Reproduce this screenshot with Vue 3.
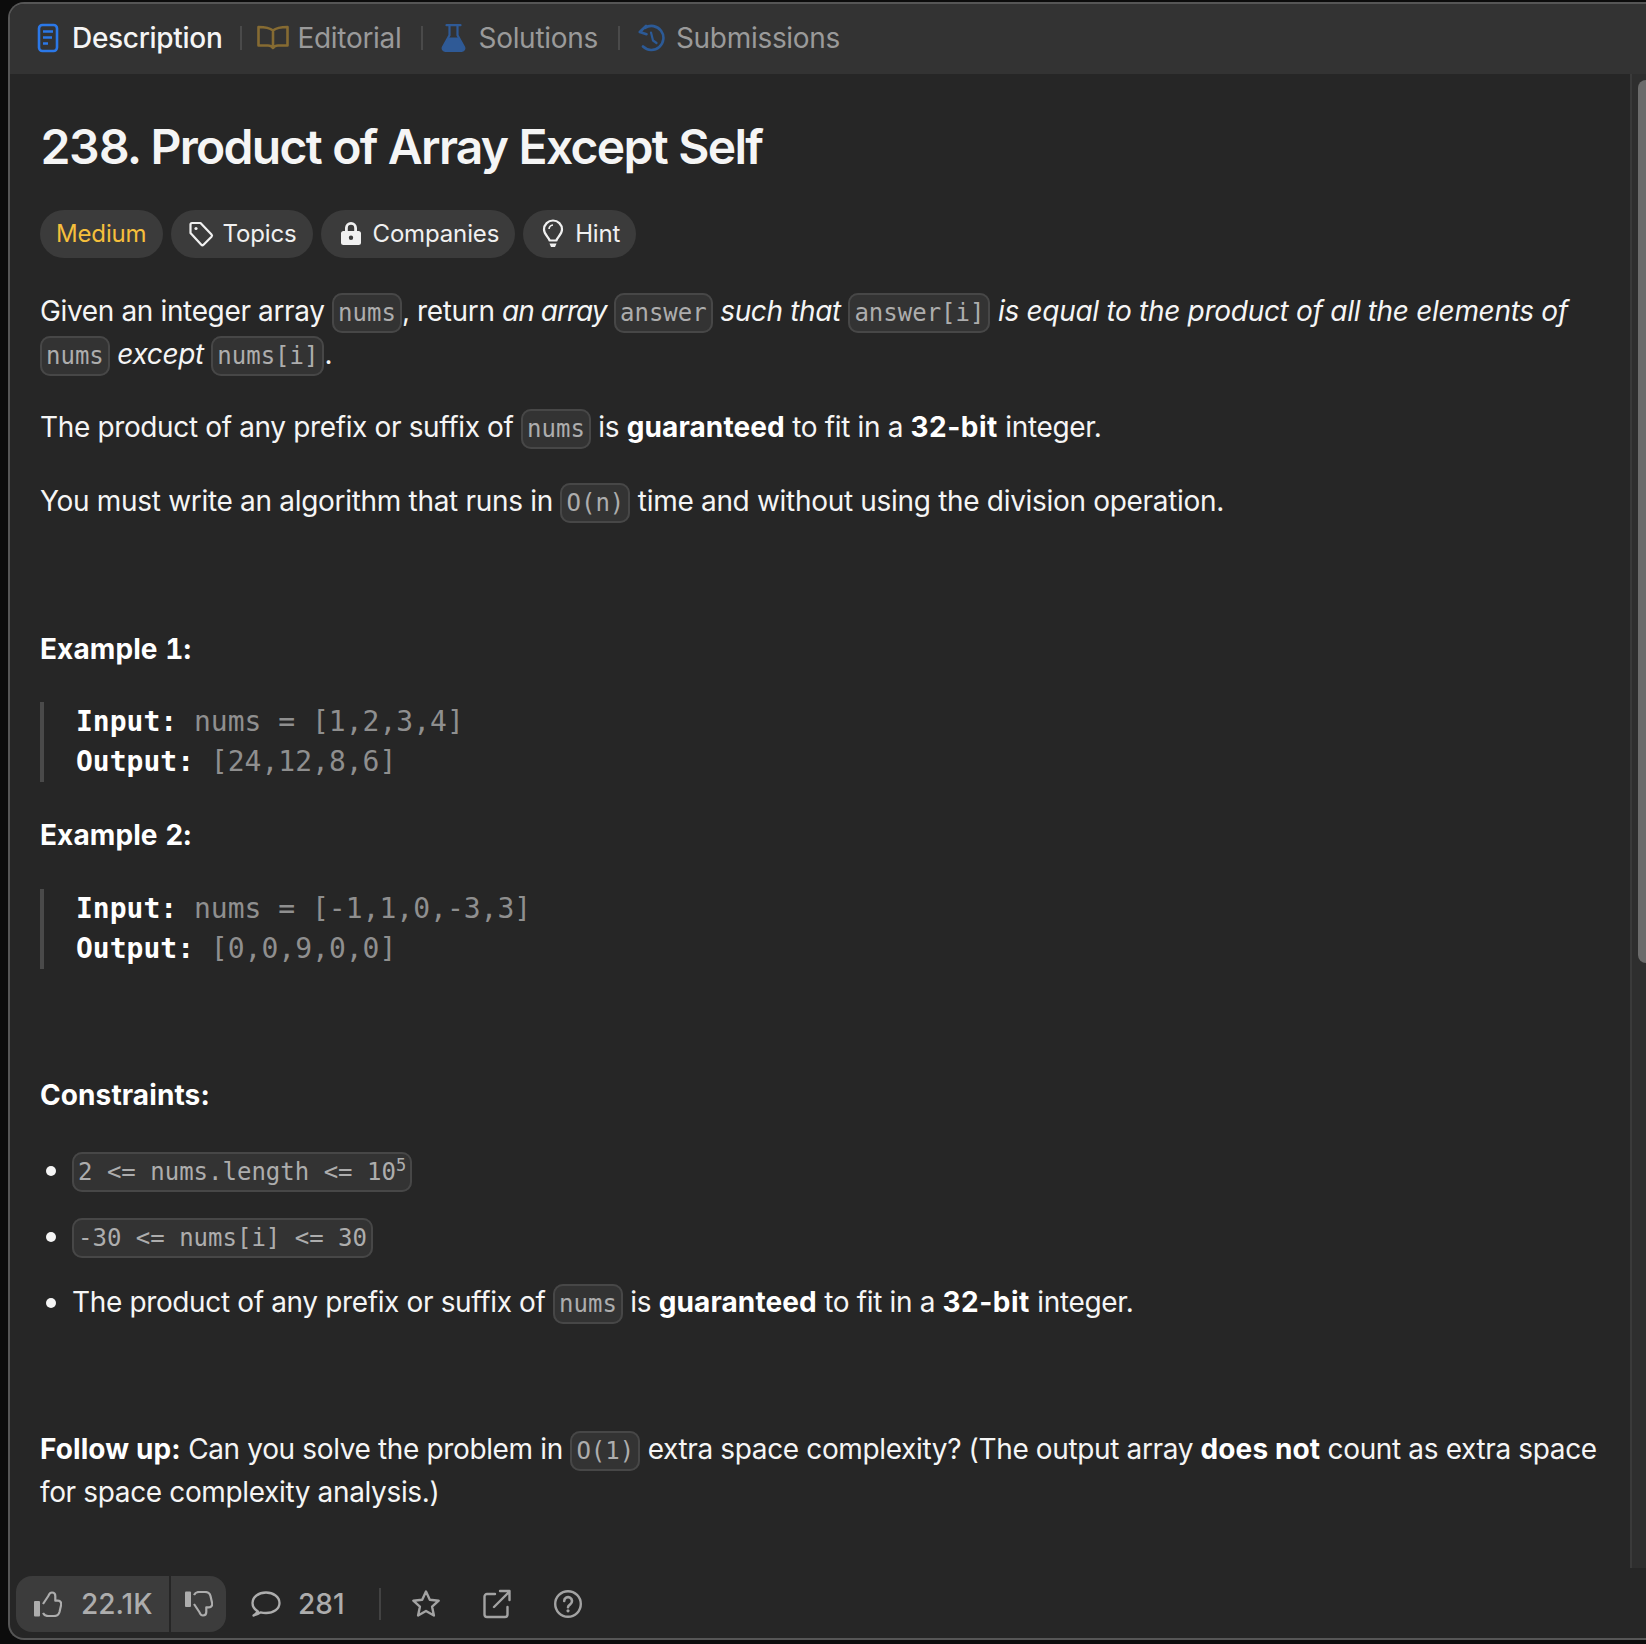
<template>
  <div class="page">
    <div class="panel">
      <nav class="tabs">
        <div class="tab active">
          <svg class="tab-icon" width="24" height="30" viewBox="0 0 24 30" fill="none" stroke="#2b78e8" stroke-width="2.600">
            <rect x="3" y="2" width="18" height="26" rx="3.500" />
            <path d="M7 8.500h10M7 14.500h9M7 20.500h5" stroke-width="2.400" />
          </svg>
          <span>Description</span>
        </div>
        <i class="sep"></i>
        <div class="tab editorial">
          <svg class="tab-icon" width="32" height="26" viewBox="0 0 32 26" fill="none" stroke="#866b32" stroke-width="2.600" stroke-linejoin="round">
            <path d="M16 5.500C13 3 9 2 1.500 2v18.500H11c2.500 0 4 1 5 2.500 1-1.500 2.500-2.500 5-2.500h9.500V2C23 2 19 3 16 5.500zV22" />
          </svg>
          <span>Editorial</span>
        </div>
        <i class="sep"></i>
        <div class="tab solutions">
          <svg class="tab-icon" width="25" height="30" viewBox="0 0 25 30">
            <path d="M5.500 2.200h14M8.500 2.200v10L2 24c-1 2 .5 4 2.500 4h16c2 0 3.500-2 2.500-4l-6.500-11.800v-10" fill="none" stroke="#2f5a96" stroke-width="2.200" stroke-linecap="round" />
            <path d="M7.500 14.500h10L23 24.500c1 2-.5 3.500-2.500 3.500h-16C2.500 28 1 26.500 2 24.500z" fill="#2f5a96" />
          </svg>
          <span>Solutions</span>
        </div>
        <i class="sep"></i>
        <div class="tab submissions">
          <svg class="tab-icon" width="28" height="28" viewBox="0 0 28 28" fill="none" stroke="#2c5a96" stroke-width="2.600" stroke-linecap="round" stroke-linejoin="round">
            <path d="M7 3.800A12 12 0 1 1 5 22.500" />
            <path d="M8 2L1.800 8l6.700 2.200" />
            <path d="M13 8.500l2 8 3.500 2.500" stroke-width="2.200" />
          </svg>
          <span>Submissions</span>
        </div>
      </nav>

      <div class="main">
        <div class="content">
          <h1>238. Product of Array Except Self</h1>

          <div class="pills">
            <div class="pill medium">Medium</div>
            <div class="pill">
              <svg width="28" height="28" viewBox="0 0 28 28" fill="none" stroke="#f0f0f0" stroke-width="2.200" stroke-linejoin="round">
                <path d="M3.500 4.500a1.500 1.500 0 0 1 1.500-1.500h8.500l11 11.500a1.600 1.600 0 0 1 0 2.200l-8 8a1.600 1.600 0 0 1-2.200 0L3.500 13z" />
                <circle cx="9" cy="8.500" r="1.600" fill="#f0f0f0" stroke="none" />
              </svg>
              Topics
            </div>
            <div class="pill">
              <svg width="28" height="28" viewBox="-2 0 28 28" fill="#f0f0f0">
                <path d="M6 11V8a6 6 0 0 1 12 0v3h-2.800V8a3.200 3.200 0 0 0-6.400 0v3z" />
                <path d="M4.500 11h15a2.500 2.500 0 0 1 2.500 2.500v9a2.500 2.500 0 0 1-2.500 2.500h-15A2.500 2.500 0 0 1 2 22.500v-9A2.500 2.500 0 0 1 4.500 11zM12 15.500a2.200 2.200 0 1 0 0 4.400 2.200 2.200 0 0 0 0-4.400z" fill-rule="evenodd" />
              </svg>
              Companies
            </div>
            <div class="pill">
              <svg width="28" height="30" viewBox="-3 0 28 30" fill="none" stroke="#f0f0f0" stroke-width="2.200" stroke-linejoin="round">
                <path d="M7.500 21.500c0-3-5.500-5.500-5.500-11a9 9 0 0 1 18 0c0 5.500-5.500 8-5.500 11z" />
                <path d="M11 6a4.500 4.500 0 0 0-4 4" stroke-width="1.600" />
                <path d="M7.500 24.500h7l-1.500 3.500h-4z" fill="#f0f0f0" stroke="none" />
              </svg>
              Hint
            </div>
          </div>

          <p>Given an integer array <code>nums</code>, return <em class="snug">an array</em> <code>answer</code> <em>such that</em> <code>answer[i]</code> <em class="loose">is equal to the product of all the elements of</em> <code>nums</code> <em>except</em> <code>nums[i]</code>.</p>
          <p>The product of any prefix or suffix of <code>nums</code> is <strong>guaranteed</strong> to fit in a <strong class="bits">32-bit</strong> integer.</p>
          <p class="runs">You must write an algorithm that runs in <code>O(n)</code> time and without using the division operation.</p>
          <p class="spacer">&nbsp;</p>

          <p class="example"><strong>Example 1:</strong></p>
          <pre><strong>Input:</strong> nums = [1,2,3,4]
<strong>Output:</strong> [24,12,8,6]</pre>

          <p class="example"><strong>Example 2:</strong></p>
          <pre><strong>Input:</strong> nums = [-1,1,0,-3,3]
<strong>Output:</strong> [0,0,9,0,0]</pre>

          <p>&nbsp;</p>
          <p><strong>Constraints:</strong></p>

          <ul>
            <li><code>2 &lt;= nums.length &lt;= 10<sup>5</sup></code></li>
            <li><code>-30 &lt;= nums[i] &lt;= 30</code></li>
            <li>The product of any prefix or suffix of <code>nums</code> is <strong>guaranteed</strong> to fit in a <strong class="bits">32-bit</strong> integer.</li>
          </ul>

          <p>&nbsp;</p>
          <p><strong>Follow up:</strong> Can you solve the problem in <code>O(1)</code> extra space complexity? (The output array <strong>does not</strong> count as extra space for space complexity analysis.)</p>
        </div>
        <div class="track"><div class="thumb"></div></div>
      </div>

      <footer class="footer">
        <div class="votes">
          <div class="vote like">
            <svg width="28" height="26" viewBox="0 0 28 26" fill="none" stroke="#adadad" stroke-width="2.200" stroke-linejoin="round">
              <rect x="0" y="10" width="6" height="15.500" rx="1" fill="#adadad" stroke="none" />
              <path d="M9 13L14.300 5C15 3 16 1.500 18 1.500c2 0 3.300 1.500 3.300 3.500v4.700H24c2.500 0 3.700 2.300 3 4.800L25.500 21c-.7 2.500-2.500 4-5.500 4h-6c-2 0-4-1-5-3" />
            </svg>
            <span>22.1K</span>
          </div>
          <div class="vote dislike">
            <svg width="28" height="26" viewBox="0 0 28 26" fill="none" stroke="#adadad" stroke-width="2.200" stroke-linejoin="round">
              <g transform="translate(0 26) scale(1 -1)">
                <rect x="0" y="10" width="6" height="15.500" rx="1" fill="#adadad" stroke="none" />
                <path d="M9 13L14.300 5C15 3 16 1.500 18 1.500c2 0 3.300 1.500 3.300 3.500v4.700H24c2.500 0 3.700 2.300 3 4.800L25.500 21c-.7 2.500-2.500 4-5.500 4h-6c-2 0-4-1-5-3" />
              </g>
            </svg>
          </div>
        </div>
        <div class="comments">
          <svg width="30" height="26" viewBox="0 0 30 26" fill="none" stroke="#adadad" stroke-width="2.300" stroke-linejoin="round">
            <path d="M7 20.500C3.500 18.500 1.500 15.500 1.500 12 1.500 6 7.500 1.500 15 1.500S28.500 6 28.500 12 22.500 22 15 22c-2 0-4-.3-5.500-.7-2 1.500-4.500 2.700-7 3.200 1.500-1 3.500-2.500 4.500-4z" />
          </svg>
          <span>281</span>
        </div>
        <i class="foot-sep"></i>
        <div class="actions">
          <svg width="30" height="30" viewBox="0 0 30 30" fill="none" stroke="#a3a3a3" stroke-width="2.400" stroke-linejoin="round">
            <path d="M15 2.500l3.800 8.200 8.900 1-6.600 6 1.800 8.800-7.900-4.500-7.900 4.500 1.800-8.800-6.600-6 8.900-1z" />
          </svg>
          <svg width="28" height="30" viewBox="0 0 28 30" fill="none" stroke="#a3a3a3" stroke-width="2.400" stroke-linejoin="round" stroke-linecap="round">
            <path d="M12 5H4a2.500 2.500 0 0 0-2.500 2.500v18A2.500 2.500 0 0 0 4 28h18a2.500 2.500 0 0 0 2.500-2.500V18" />
            <path d="M11 18L26 3M17 2h9.500v9" />
          </svg>
          <svg width="30" height="30" viewBox="0 0 30 30" fill="none" stroke="#a3a3a3" stroke-width="2.400" stroke-linecap="round">
            <circle cx="15" cy="15" r="12.800" />
            <path d="M11.200 12a3.900 3.900 0 1 1 6 3.300c-1.400.9-2.200 1.500-2.200 3" stroke-width="2.600" />
            <circle cx="15" cy="21.800" r="1.600" fill="#a3a3a3" stroke="none" />
          </svg>
        </div>
      </footer>
    </div>
  </div>
</template>

<script setup>
</script>

<style>
body {
  background: #0c0c0c;
}
</style>

<style scoped>
.page {
  height: 1644px;
  box-sizing: border-box;
  padding: 2px 0 4px 8px;
  background: #0c0c0c;
  font-family: Inter, "Liberation Sans", sans-serif;
  color: #f5f5f5;
  overflow: hidden;
}

.panel {
  height: 100%;
  box-sizing: border-box;
  display: flex;
  flex-direction: column;
  background: #262626;
  border: 2px solid #565656;
  border-right: none;
  border-radius: 16px 0 0 16px;
  overflow: hidden;
}

.tabs {
  flex: none;
  height: 70px;
  box-sizing: border-box;
  display: flex;
  align-items: center;
  gap: 18px;
  padding: 0 0 2px 26px;
  background: #333;
  font-size: 28px;
  letter-spacing: -0.3px;
  color: #9a9a9a;
}

.tab {
  display: flex;
  align-items: center;
  gap: 12px;
}

.tab.editorial {
  gap: 8px;
  margin: 0 2px 0 -3px;
}

.tab.solutions {
  margin-right: 2px;
}

.tab.submissions {
  gap: 10px;
}

.tab.active {
  color: #f5f5f5;
  font-weight: 500;
}

.tab-icon {
  flex: none;
}

.sep {
  width: 2px;
  height: 24px;
  background: #4a4a4a;
}

.main {
  flex: 1;
  min-height: 0;
  display: flex;
}

.content {
  flex: 1;
  min-width: 0;
  box-sizing: border-box;
  padding: 41px 30px 0;
  font-size: 28px;
  line-height: 42.5px;
  letter-spacing: -0.36px;
}

h1 {
  margin: 0 0 31px;
  font-size: 48px;
  line-height: 64px;
  font-weight: 600;
  letter-spacing: -1.7px;
  font-variant-numeric: tabular-nums;
}

.pills {
  display: flex;
  gap: 8px;
  margin-bottom: 32px;
}

.pill {
  height: 48px;
  display: flex;
  align-items: center;
  gap: 8px;
  padding: 0 16px;
  background: #3b3b3b;
  border-radius: 24px;
  font-size: 24px;
  letter-spacing: -0.15px;
  line-height: 48px;
  color: #f0f0f0;
}

.medium {
  color: #f5bf3c;
}

p {
  margin: 0 0 31px;
}

p.spacer {
  margin-bottom: 32px;
}

p.example {
  margin-bottom: 32px;
  font-variant-numeric: tabular-nums;
}

p.runs {
  letter-spacing: -0.31px;
}

em.snug {
  letter-spacing: -1px;
}

em.loose {
  letter-spacing: -0.3px;
}

strong {
  font-weight: 700;
  letter-spacing: 0.1px;
  color: #fff;
}

strong.bits {
  letter-spacing: 0.5px;
}

code {
  padding: 4px 4px;
  font-family: "DejaVu Sans Mono", "Liberation Mono", monospace;
  font-size: 24px;
  line-height: 1;
  letter-spacing: 0;
  color: #adadad;
  background: #333;
  border: 2px solid #474747;
  border-radius: 10px;
}

sup {
  font-size: 17px;
  line-height: 0;
}

pre {
  margin: 0 0 32px;
  padding: 0 0 0 32px;
  border-left: 4px solid #4a4a4a;
  font-family: "DejaVu Sans Mono", "Liberation Mono", monospace;
  font-size: 28px;
  line-height: 40px;
  letter-spacing: 0;
  color: #8f8f8f;
}

pre strong {
  font-weight: 600;
  letter-spacing: 0;
}

ul {
  margin: 1px 0 31.5px;
  padding: 0 0 0 32px;
}

li {
  margin-bottom: 22.5px;
}

li:last-child {
  margin-bottom: 0;
}

li::marker {
  font-size: 30px;
}

.track {
  flex: none;
  width: 16px;
  box-sizing: border-box;
  background: #2e2e2e;
  border-left: 2px solid #3a3a3a;
  padding: 6px 0 0 6px;
}

.thumb {
  width: 8px;
  height: 883px;
  background: #6b6b6b;
  border-radius: 8px 0 0 8px;
}

.footer {
  flex: none;
  height: 70px;
  box-sizing: border-box;
  display: flex;
  align-items: center;
  padding: 2px 0 0 6px;
  color: #adadad;
  font-size: 28px;
  font-weight: 500;
}

.votes {
  height: 56px;
  display: flex;
  background: #3c3c3c;
  border-radius: 16px;
  overflow: hidden;
}

.vote {
  display: flex;
  align-items: center;
}

.like {
  width: 155px;
  box-sizing: border-box;
  gap: 19px;
  padding-left: 18px;
  border-right: 2px solid #262626;
}

.dislike {
  padding: 0 13px 0 14px;
}

.comments {
  display: flex;
  align-items: center;
  gap: 17px;
  margin-left: 25px;
}

.foot-sep {
  width: 2px;
  height: 32px;
  margin: 0 30px 0 34px;
  background: #424242;
}

.actions {
  display: flex;
  align-items: center;
  gap: 42px;
}
</style>
